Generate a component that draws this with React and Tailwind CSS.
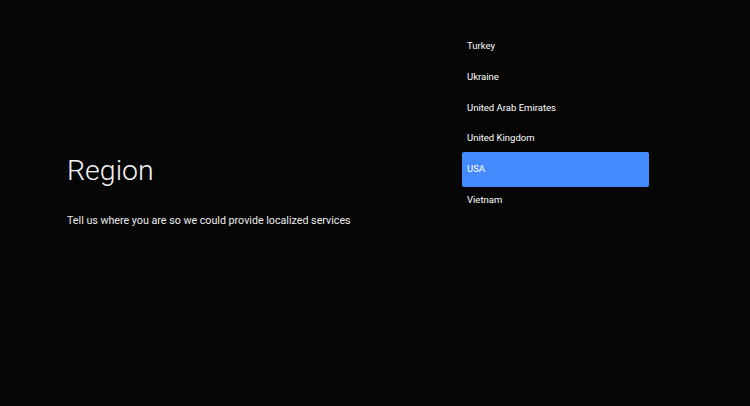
export default function App() {
  const items = ["Turkey", "Ukraine", "United Arab Emirates", "United Kingdom", "USA", "Vietnam"];
  return (
    <div className="w-[750px] h-[406px] bg-[#060606] flex text-white overflow-hidden" style={{ fontFamily: "Roboto, 'Noto Sans', sans-serif" }}>
      <div className="w-[462px] pl-[67px] pt-[152px] flex flex-col">
        <div className="text-[28.5px] font-light leading-[38px] text-[#f4f4f4]">Region</div>
        <div className="mt-[23px] text-[10.7px] leading-[16px] text-[#ececec]">Tell us where you are so we could provide localized services</div>
      </div>
      <div className="pt-[31px] w-[187px] flex flex-col">
        {items.map((it) =>
          it === "USA" ? (
            <div key={it} className="h-[35px] -my-[2px] flex items-center px-[5px] bg-[#448aff] rounded-[2px] text-[9.5px] text-white">
              {it}
            </div>
          ) : (
            <div key={it} className="h-[30.7px] flex items-center px-[5px] text-[9.5px] text-white">
              {it}
            </div>
          )
        )}
      </div>
    </div>
  );
}
